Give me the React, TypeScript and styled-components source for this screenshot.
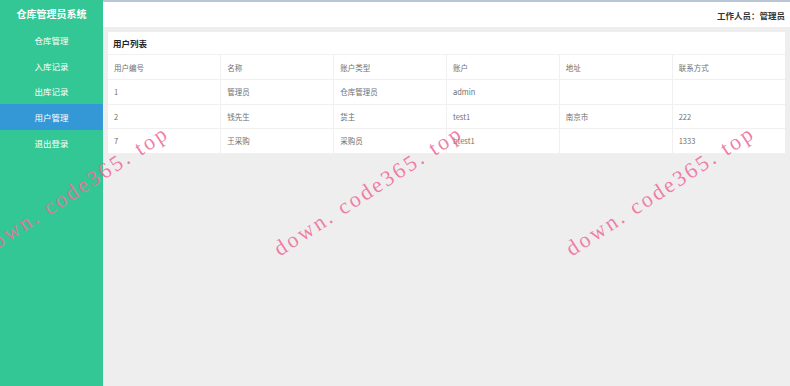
import React from "react";
import styled, { createGlobalStyle } from "styled-components";

const Global = createGlobalStyle`
  html, body { margin: 0; padding: 0; height: 100%; }
  body { font-family: "Noto Sans CJK SC", "Noto Sans", sans-serif; background: #eeeeee; }
  #root { height: 386px; }
`;

const Page = styled.div`
  position: relative;
  display: flex;
  width: 790px;
  height: 386px;
  overflow: hidden;
`;

const Sidebar = styled.nav`
  width: 103px;
  flex-shrink: 0;
  background: #33c795;
  display: flex;
  flex-direction: column;
`;

const Brand = styled.div`
  height: 27px;
  display: flex;
  align-items: center;
  justify-content: center;
  color: #fff;
  font-weight: 700;
  font-size: 10px;
`;

const MenuItem = styled.div<{ $active?: boolean }>`
  height: 25.75px;
  display: flex;
  align-items: center;
  justify-content: center;
  color: #fff;
  font-size: 8.5px;
  background: ${(p) => (p.$active ? "#3598d6" : "transparent")};
`;

const Main = styled.main`
  flex: 1;
  display: flex;
  flex-direction: column;
  border-top: 2px solid #b9c6d6;
`;

const Header = styled.header`
  height: 25px;
  background: #fff;
  display: flex;
  align-items: center;
  justify-content: flex-end;
  padding-right: 5px;
  font-size: 8.5px;
  font-weight: 700;
  color: #333;
`;

const Content = styled.div`
  padding: 5px;
`;

const Card = styled.section`
  background: #fff;
`;

const CardTitle = styled.div`
  height: 22px;
  display: flex;
  align-items: center;
  padding-left: 5px;
  font-size: 8.5px;
  font-weight: 700;
  color: #222;
  border-bottom: 1px solid #f0f0f0;
`;

const Table = styled.table`
  width: 100%;
  border-collapse: collapse;
  table-layout: fixed;
  font-size: 7.5px;
  color: #707070;
`;

const Th = styled.th`
  height: 24px;
  text-align: left;
  font-weight: 400;
  padding: 0 6px;
  border-right: 1px solid #f0f0f0;
  border-bottom: 1px solid #f0f0f0;
  &:last-child { border-right: none; }
`;

const Td = styled.td`
  height: 23.5px;
  padding: 0 6px;
  border-right: 1px solid #f0f0f0;
  border-bottom: 1px solid #f0f0f0;
  &:last-child { border-right: none; }
`;

const Watermark = styled.div<{ $x: number; $y: number }>`
  position: absolute;
  left: ${(p) => p.$x}px;
  top: ${(p) => p.$y}px;
  font-family: "Liberation Serif", "DejaVu Serif", serif;
  font-size: 22px;
  letter-spacing: 2.6px;
  color: rgba(240, 110, 155, 0.9);
  white-space: nowrap;
  transform-origin: 0 100%;
  transform: rotate(-33deg);
  pointer-events: none;
  line-height: 1;
`;

const menu = ["仓库管理", "入库记录", "出库记录", "用户管理", "退出登录"];
const cols = ["用户编号", "名称", "账户类型", "账户", "地址", "联系方式"];
const rows = [
  ["1", "管理员", "仓库管理员", "admin", "", ""],
  ["2", "钱先生", "货主", "test1", "南京市", "222"],
  ["7", "王采购", "采购员", "btest1", "", "1333"],
];

export default function App() {
  return (
    <>
      <Global />
      <Page>
        <Sidebar>
          <Brand>仓库管理员系统</Brand>
          {menu.map((m) => (
            <MenuItem key={m} $active={m === "用户管理"}>
              {m}
            </MenuItem>
          ))}
        </Sidebar>
        <Main>
          <Header>工作人员：管理员</Header>
          <Content>
            <Card>
              <CardTitle>用户列表</CardTitle>
              <Table>
                <thead>
                  <tr>
                    {cols.map((c) => (
                      <Th key={c}>{c}</Th>
                    ))}
                  </tr>
                </thead>
                <tbody>
                  {rows.map((r, i) => (
                    <tr key={i}>
                      {r.map((c, j) => (
                        <Td key={j}>{c}</Td>
                      ))}
                    </tr>
                  ))}
                </tbody>
              </Table>
            </Card>
          </Content>
        </Main>
        <Watermark $x={-12} $y={238}>down. code365. top</Watermark>
        <Watermark $x={282} $y={238}>down. code365. top</Watermark>
        <Watermark $x={574} $y={238}>down. code365. top</Watermark>
      </Page>
    </>
  );
}
